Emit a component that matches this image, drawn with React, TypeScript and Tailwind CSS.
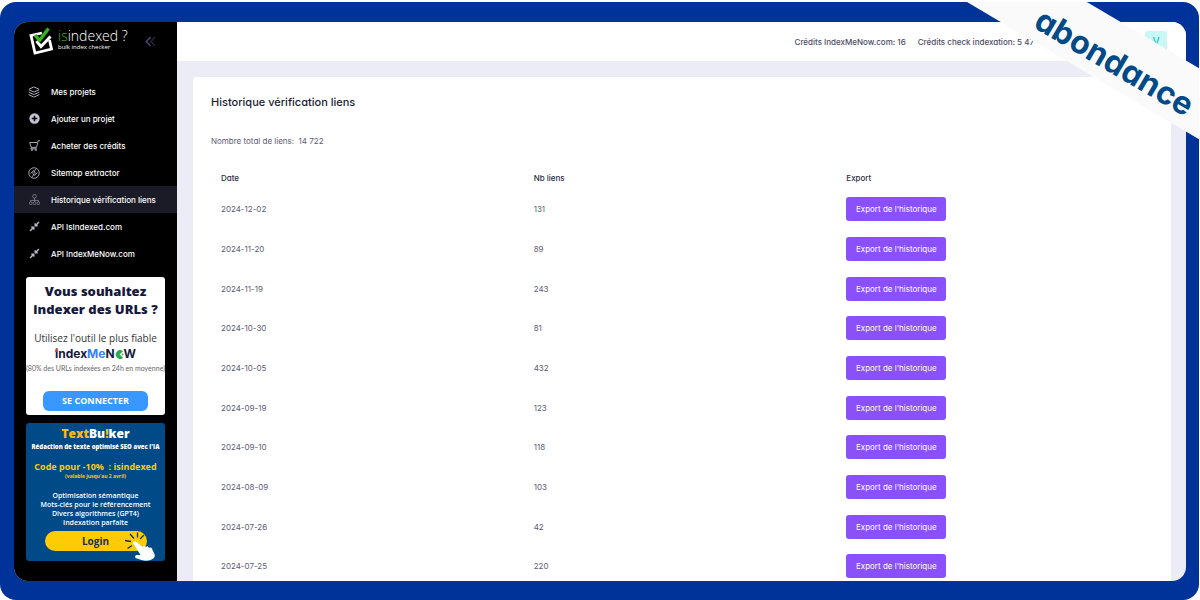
import type { ReactNode } from "react";
import { Layers } from "lucide-react";
import { FaCompressAlt } from "react-icons/fa";

const PlusIcon = () => (
  <svg viewBox="0 0 12 12" className="size-[11px]">
    <circle cx="6" cy="6" r="5.6" fill="#c3c3d2" />
    <path d="M6 3v6M3 6h6" stroke="#000" strokeWidth="1.6" />
  </svg>
);

const CartIcon = () => (
  <svg viewBox="0 0 24 24" className="size-[11px]" fill="none" stroke="#b4b4c4" strokeWidth="2">
    <path d="M24 1.500h-4L16.500 16H5L1.500 5.500H17.500M5 16l-1 3h13" />
    <circle cx="6.500" cy="21.500" r="1.600" />
    <circle cx="15" cy="21.500" r="1.600" />
  </svg>
);

const ExtractIcon = () => (
  <svg viewBox="0 0 24 24" className="size-[12px]" fill="none" stroke="#a9a9bb" strokeWidth="1.800">
    <circle cx="12" cy="12" r="10.500" />
    <path d="M5 13l6-6 3 3M19 11l-6 6-3-3M9 12l3-3 3 3-3 3zM16 4l-3 4M8 20l3-4" />
  </svg>
);

const TreeIcon = () => (
  <svg viewBox="0 0 24 24" className="size-[11px]" fill="none" stroke="#8d8da0" strokeWidth="1.600">
    <circle cx="12" cy="5" r="4" />
    <path d="M12 9v8M3.500 17v-3h17v3" />
    <rect x="1" y="17" width="5.500" height="6" rx="2" />
    <rect x="9.200" y="17" width="5.500" height="6" rx="2" />
    <rect x="17.500" y="17" width="5.500" height="6" rx="2" />
  </svg>
);

const ApiIcon = () => <FaCompressAlt className="size-[11px] text-[#b9b9c9]" />;

const navItems: { label: string; icon: ReactNode; active?: boolean }[] = [
  { label: "Mes projets", icon: <Layers className="size-[12px] text-[#b4b4c4]" /> },
  { label: "Ajouter un projet", icon: <PlusIcon /> },
  { label: "Acheter des crédits", icon: <CartIcon /> },
  { label: "Sitemap extractor", icon: <ExtractIcon /> },
  { label: "Historique vérification liens", icon: <TreeIcon />, active: true },
  { label: "API IsIndexed.com", icon: <ApiIcon /> },
  { label: "API IndexMeNow.com", icon: <ApiIcon /> },
];

const rows: [string, string][] = [
  ["2024-12-02", "131"],
  ["2024-11-20", "89"],
  ["2024-11-19", "243"],
  ["2024-10-30", "81"],
  ["2024-10-05", "432"],
  ["2024-09-19", "123"],
  ["2024-09-10", "118"],
  ["2024-08-09", "103"],
  ["2024-07-26", "42"],
  ["2024-07-25", "220"],
];

function Brand() {
  return (
    <div className="flex h-[56px] items-start pl-[15px] pt-[4px]">
      <svg viewBox="0 0 26 29" className="h-[29px] w-[26px] shrink-0" fill="none">
        <path d="M13 7L2 9.500L6 27L22.500 23L20.500 14" stroke="#fff" strokeWidth="2.800" />
        <path d="M7.500 15L12 20.500L21.500 10.500" stroke="#fff" strokeWidth="3" />
        <path d="M6 9L10.500 14.500L19.500 2.500" stroke="#35b51c" strokeWidth="3.400" />
      </svg>
      <div className="ml-[3px] pt-[2px] font-['Open_Sans',sans-serif] text-white">
        <div className="whitespace-nowrap text-[14px] font-light leading-[16px]">
          <span className="text-[#35b51c]">is</span>indexed ?
        </div>
        <div className="whitespace-nowrap text-[6px] leading-[7px]">bulk index checker</div>
      </div>
      <button type="button" aria-label="Réduire le menu" className="ml-auto mr-[21px] mt-[10px]">
        <svg viewBox="0 0 12 12" className="size-[11px]" fill="none" strokeWidth="1.500">
          <path d="M6 1L1.500 6L6 11" stroke="#494b74" />
          <path d="M11 1L6.500 6L11 11" stroke="#25263c" />
        </svg>
      </button>
    </div>
  );
}

function IndexMeNowAd() {
  return (
    <section className="flex h-[138px] flex-col items-center rounded-[3px] bg-white pt-[5px] font-['Open_Sans',sans-serif] whitespace-nowrap text-[#17193b]">
      <h2 className="text-center text-[13px] font-extrabold leading-[18px]">
        Vous souhaitez
        <br />
        indexer des URLs ?
      </h2>
      <p className="mt-[12px] text-[10px] leading-[16px] text-[#333]">Utilisez l'outil le plus fiable</p>
      <p className="flex items-center font-['Inter',sans-serif] text-[12px] font-bold leading-[16px]">
        <span className="relative">
          i<span className="absolute left-0 top-[3px] size-[3px] rounded-full bg-[#e5352b]" />
        </span>
        ndex<span className="text-[#3b82f6]">Me</span>N
        <svg viewBox="0 0 10 10" className="size-[9px]" role="img" aria-label="O">
          <path d="M5 5L9 1.500A4.800 4.800 0 1 0 9 8.500Z" fill="#2ba84a" />
          <circle cx="8.500" cy="5" r="1" fill="#2ba84a" />
        </svg>
        W
      </p>
      <p className="mt-px font-['Lato',sans-serif] text-[7px] leading-[10px] text-[#666]">(80% des URLs indexées en 24h en moyenne)</p>
      <button type="button" className="mt-[18px] h-[20px] w-[105px] rounded-[6px] bg-[#3898ff] text-[9px] font-bold leading-[20px] text-white">
        SE CONNECTER
      </button>
    </section>
  );
}

function TextBulkerAd() {
  return (
    <section className="mt-[8px] flex h-[138px] flex-col items-center rounded-[3px] bg-[#004a87] pt-[3px] font-['Open_Sans',sans-serif] font-bold whitespace-nowrap text-white">
      <h2 className="text-[12px] font-extrabold leading-[15px]">
        <span className="text-[#fdb913]">Text</span>Bu<span className="text-[#fdb913]">!</span>ker
      </h2>
      <p className="text-[6px] font-extrabold leading-[12px]">Rédaction de texte optimisé SEO avec l'IA</p>
      <p className="mt-[8px] whitespace-pre text-[9px] leading-[12px] text-[#ffcb05]">Code pour -10%  : isindexed</p>
      <p className="text-[5px] leading-[6px] text-[#ffcb05]">(valable jusqu'au 2 avril)</p>
      <p className="mt-[12px] text-center text-[7px] font-semibold leading-[9px]">
        Optimisation sémantique
        <br />
        Mots-clés pour le référencement
        <br />
        Divers algorithmes (GPT4)
        <br />
        Indexation parfaite
      </p>
      <div className="relative mt-[4px]">
        <button type="button" className="block h-[20px] w-[102px] rounded-full bg-[#ffcb05] text-[10px] leading-[20px] text-[#17304f]">
          Login
        </button>
        <svg viewBox="0 0 32 30" className="pointer-events-none absolute -right-[9px] top-0 h-[30px] w-[32px]" fill="none">
          <path d="M1 9.500l6 1M3.500 17.500l4.500-3M6 3l4 4.500M13.500 1.500v5M20 4l-4 4" stroke="#17304f" strokeWidth="1.300" />
          <path
            d="M9.500 11c1-1 2-1 3 0l6 5c1-2 2-2 3.500 0c1-1 2-1 3 1c2-1 3 0 3.500 2l2 4c1 3-1 5-4 6c-3 1-6 1-9 0l-6-2c-1-1 0-3 1-3l4 0l-7-11c-1-1-1-2 0-2z"
            fill="#fff"
          />
        </svg>
      </div>
    </section>
  );
}

export default function App() {
  return (
    <div className="h-screen bg-white pr-px pt-[2px] font-['Inter',sans-serif] [font-feature-settings:'cv11']">
      <div className="relative h-full overflow-hidden rounded-2xl bg-[#003399] pb-[19px] pl-[14px] pr-[13px] pt-[20px]">
        <div className="flex h-full overflow-hidden rounded-[14px] bg-[#ebecf6]">
          <aside className="w-[163px] shrink-0 bg-black">
            <Brand />
            <nav>
              {navItems.map((item) => (
                <a
                  key={item.label}
                  href="#"
                  className={
                    item.active
                      ? "flex h-[27px] items-center bg-[#1b1b28] pl-[13px] text-[8px] font-medium text-white"
                      : "flex h-[27px] items-center pl-[13px] text-[8px] font-medium text-white"
                  }
                >
                  <span className="mr-[10px] flex w-[14px] justify-center">{item.icon}</span>
                  <span className="whitespace-nowrap">{item.label}</span>
                </a>
              ))}
            </nav>
            <div className="px-[12px] pt-[10px]">
              <IndexMeNowAd />
              <TextBulkerAd />
            </div>
          </aside>

          <div className="flex min-w-0 flex-1 flex-col">
            <header className="flex h-[39px] shrink-0 items-center justify-end bg-white pr-[19px] text-[8px] font-medium text-[#4c4c63]">
              <span className="mr-[12px] whitespace-nowrap">Crédits IndexMeNow.com: 16</span>
              <span className="mr-[111px] whitespace-nowrap">Crédits check indexation: 5 47</span>
              <span className="flex size-[22px] items-center justify-center rounded-[3px] bg-[#c9f7f5] text-[10px] text-[#1bc5bd]">V</span>
            </header>

            <main className="ml-[16px] mr-[15px] mt-[16px] flex-1 overflow-hidden rounded-t-[4px] bg-white pl-[18px] pr-[22px] pt-[17px]">
              <h1 className="text-[11px] font-medium leading-[16px] text-[#181c32]">Historique vérification liens</h1>
              <p className="mt-[24px] whitespace-pre text-[8px] leading-[14px] text-[#5b5c72]">Nombre total de liens:  14 722</p>
              <table className="mt-[19px] w-full table-fixed text-left text-[8px]">
                <thead>
                  <tr className="h-[22px] text-[#2b2d45]">
                    <th className="px-[10px] font-medium">Date</th>
                    <th className="px-[10px] font-medium">Nb liens</th>
                    <th className="px-[10px] font-medium">Export</th>
                  </tr>
                </thead>
                <tbody>
                  {rows.map(([date, count]) => (
                    <tr key={date} className="h-10 text-[#5b5c72] nth-[3n]:h-[39px]">
                      <td className="px-[10px]">{date}</td>
                      <td className="px-[10px]">{count}</td>
                      <td className="px-[10px]">
                        <button type="button" className="block h-[24px] w-[100px] whitespace-nowrap rounded-[3px] bg-[#8950fc] text-white">
                          Export de l'historique
                        </button>
                      </td>
                    </tr>
                  ))}
                </tbody>
              </table>
            </main>
          </div>
        </div>

        <div className="absolute -right-[85px] top-[21px] flex h-[61px] w-[340px] rotate-[30.600deg] items-center justify-center bg-[#fafafa] pl-[10px] pt-[14px] text-[32px] font-bold leading-none text-[#004a87]">
          abondance
        </div>
      </div>
    </div>
  );
}
